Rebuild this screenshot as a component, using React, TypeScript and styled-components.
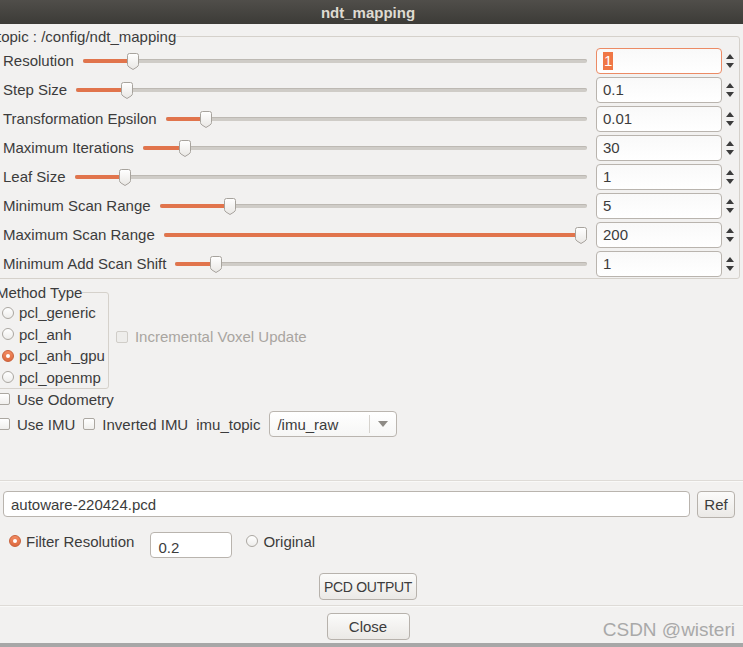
import React from "react"
import styled, { createGlobalStyle } from "styled-components"

const GlobalStyle = createGlobalStyle`
  html, body {
    margin: 0;
    padding: 0;
  }
  body {
    width: 743px;
    height: 647px;
    overflow: hidden;
    background: #a7a7a7;
    font-family: "Liberation Sans", Arial, sans-serif;
  }
`

const Window = styled.div`
  width: 752px;
  height: 643px;
  margin-left: -8px;
  display: flex;
  flex-direction: column;
  background: #f2f1f0;
  color: #3c3c3c;
  font-size: 15px;
  position: relative;
`

const TitleBar = styled.div`
  flex: none;
  height: 24px;
  display: flex;
  align-items: center;
  justify-content: center;
  background: linear-gradient(#504e4a, #3c3b37);
  color: #dfdbd2;
  font-weight: bold;
  font-size: 15px;
`

const Body = styled.div`
  display: flex;
  flex-direction: column;
  padding: 4px 4px 0 4px;
`

const Frame = styled.fieldset`
  margin: 0;
  padding: 1px 4px 0 6px;
  border: 1px solid #d5d1cb;
  border-radius: 3px;
  min-inline-size: 0;
`

const Legend = styled.legend`
  padding: 0;
  margin-left: -6px;
  line-height: 17px;
  font-size: 15px;
  color: #3c3c3c;
`

const ParamRow = styled.div`
  height: 29px;
  display: grid;
  grid-template-columns: auto 1fr 139px;
  align-items: center;
  column-gap: 9px;
`

const Label = styled.span<{ $ml?: number }>`
  white-space: nowrap;
  margin-left: ${(p) => p.$ml ?? 0}px;
`

const SliderBox = styled.div`
  position: relative;
  height: 18px;
`

const Groove = styled.div`
  position: absolute;
  left: 0;
  right: 0;
  top: 7px;
  height: 4px;
  border-radius: 2px;
  background: #cfccc7;
  box-shadow: inset 0 1px 0 #bdb9b3;
`

const Fill = styled.div`
  position: absolute;
  left: 0;
  top: 7px;
  height: 4px;
  border-radius: 2px;
  background: #e1744c;
`

const Handle = styled.svg`
  position: absolute;
  top: 1px;
  margin-left: -6px;
`

const SpinBox = styled.div`
  display: flex;
  align-items: center;
  gap: 3px;
`

const SpinField = styled.div<{ $focus?: boolean }>`
  width: 126px;
  height: 26px;
  box-sizing: border-box;
  border: 1px solid ${(p) => (p.$focus ? "#ec8b65" : "#b9b4ae")};
  border-radius: 4px;
  background: linear-gradient(#f9f9f9, #ffffff);
  display: flex;
  align-items: center;
  padding-left: 6px;
  font-size: 15px;
  color: #3c3c3c;
`

const Selected = styled.span`
  background: #f07746;
  color: #fff;
  padding: 0 1px;
  line-height: 18px;
`

const Arrows = styled.div`
  width: 10px;
  display: flex;
  flex-direction: column;
  align-items: center;
  gap: 4px;
`

const MethodRow = styled.div`
  display: flex;
  align-items: center;
  margin-top: 5px;
`

const MethodFrame = styled(Frame)`
  padding: 1px 3px 0 5px;
`

const RadioItem = styled.label`
  display: flex;
  align-items: center;
  gap: 5px;
  height: 21.5px;
  white-space: nowrap;
`

const RadioCircle = styled.span<{ $on?: boolean }>`
  width: 12px;
  height: 12px;
  box-sizing: border-box;
  border-radius: 50%;
  flex: none;
  display: flex;
  align-items: center;
  justify-content: center;
  border: 1px solid ${(p) => (p.$on ? "#c8603a" : "#aba7a1")};
  background: ${(p) =>
    p.$on ? "linear-gradient(#f28b62, #de6a3f)" : "linear-gradient(#ffffff, #eeedeb)"};
  &::after {
    content: "";
    display: ${(p) => (p.$on ? "block" : "none")};
    width: 4px;
    height: 4px;
    border-radius: 50%;
    background: #fff;
  }
`

const CheckItem = styled.label<{ $disabled?: boolean; $ml?: number }>`
  display: flex;
  align-items: center;
  gap: 7px;
  white-space: nowrap;
  margin-left: ${(p) => p.$ml ?? 0}px;
  color: ${(p) => (p.$disabled ? "#a9a5a0" : "#3c3c3c")};
`

const CheckBox = styled.span<{ $disabled?: boolean }>`
  width: 12px;
  height: 12px;
  box-sizing: border-box;
  flex: none;
  border-radius: 2px;
  border: 1px solid ${(p) => (p.$disabled ? "#d0cdc8" : "#aba7a1")};
  background: ${(p) => (p.$disabled ? "#eeedeb" : "linear-gradient(#ffffff, #f0efed)")};
`

const OdoRow = styled.div`
  height: 20px;
  display: flex;
  align-items: center;
  margin-left: 2px;
`

const ImuRow = styled.div`
  height: 26px;
  margin-top: 2px;
  display: flex;
  align-items: center;
  margin-left: 2px;
`

const Combo = styled.div`
  width: 128px;
  height: 26px;
  box-sizing: border-box;
  border: 1px solid #bab5af;
  border-radius: 4px;
  background: linear-gradient(#ffffff, #f6f6f5);
  display: flex;
  align-items: stretch;
  margin-left: 9px;
`

const ComboText = styled.div`
  flex: 1;
  display: flex;
  align-items: center;
  padding-left: 7px;
`

const ComboButton = styled.div`
  width: 26px;
  border-left: 1px solid #d6d3ce;
  margin: 3px 0;
  display: flex;
  align-items: center;
  justify-content: center;
`

const Separator = styled.div<{ $top: number }>`
  height: 1px;
  background: #dedbd7;
  border-bottom: 1px solid #f9f9f8;
  margin: ${(p) => p.$top}px -4px 0 -4px;
`

const FileRow = styled.div`
  display: flex;
  gap: 7px;
  margin-top: 9px;
  padding-left: 7px;
  padding-right: 5px;
`

const TextField = styled.div<{ $w?: number; $pt?: number; $ml?: number }>`
  ${(p) => (p.$w ? `width: ${p.$w}px;` : "flex: 1;")}
  height: 26px;
  box-sizing: border-box;
  border: 1px solid #b9b4ae;
  border-radius: 4px;
  background: #ffffff;
  display: flex;
  align-items: ${(p) => (p.$pt ? "flex-start" : "center")};
  padding-left: 7px;
  padding-top: ${(p) => p.$pt ?? 0}px;
  margin-left: ${(p) => p.$ml ?? 0}px;
  font-size: 15px;
`

const Button = styled.button<{ $w: number }>`
  width: ${(p) => p.$w}px;
  height: 27px;
  box-sizing: border-box;
  border: 1px solid #b7b2ac;
  border-radius: 4px;
  background: linear-gradient(#fbfbfa, #ebe9e6);
  font-family: "Liberation Sans", Arial, sans-serif;
  font-size: 15px;
  color: #3c3c3c;
  padding: 0;
  white-space: nowrap;
`

const SmallButton = styled(Button)`
  font-size: 14px;
  letter-spacing: -0.3px;
`

const FilterRow = styled.div`
  display: flex;
  align-items: flex-start;
  margin-top: 14px;
  padding-left: 13px;
`

const FilterLabel = styled(RadioItem)<{ $ml?: number }>`
  height: 18px;
  margin-left: ${(p) => p.$ml ?? 0}px;
`

const CenterRow = styled.div<{ $top: number }>`
  display: flex;
  justify-content: center;
  margin-top: ${(p) => p.$top}px;
`

const Watermark = styled.div`
  position: absolute;
  right: 9px;
  bottom: 2px;
  font-family: "Liberation Sans", Arial, sans-serif;
  font-size: 19px;
  color: #a9a9a9;
`

const params = [
  { label: "Resolution", value: "1", frac: 0.09, focus: true },
  { label: "Step Size", value: "0.1", frac: 0.09 },
  { label: "Transformation Epsilon", value: "0.01", frac: 0.084 },
  { label: "Maximum Iterations", value: "30", frac: 0.084 },
  { label: "Leaf Size", value: "1", frac: 0.089 },
  { label: "Minimum Scan Range", value: "5", frac: 0.154 },
  { label: "Maximum Scan Range", value: "200", frac: 1 },
  { label: "Minimum Add Scan Shift", value: "1", frac: 0.0875 },
]

const methods = ["pcl_generic", "pcl_anh", "pcl_anh_gpu", "pcl_openmp"]

const Slider = ({ frac }: { frac: number }) => {
  const pos = `calc(6px + (100% - 12px) * ${frac})`
  return (
    <SliderBox>
      <Groove />
      <Fill style={{ width: pos }} />
      <Handle width="12" height="17" viewBox="0 0 12 17" style={{ left: pos }}>
        <defs>
          <linearGradient id="hg" x1="0" y1="0" x2="0" y2="1">
            <stop offset="0" stopColor="#ffffff" />
            <stop offset="1" stopColor="#e9e7e4" />
          </linearGradient>
        </defs>
        <path
          d="M2.5 0.5 H9.5 Q11.5 0.5 11.5 2.5 V11.5 Q11.5 13 10 14 L6 16.5 L2 14 Q0.5 13 0.5 11.5 V2.5 Q0.5 0.5 2.5 0.5 Z"
          fill="url(#hg)"
          stroke="#a7a39d"
        />
      </Handle>
    </SliderBox>
  )
}

const SpinArrows = () => (
  <Arrows>
    <svg width="8" height="5" viewBox="0 0 8 5">
      <path d="M0 5 L4 0 L8 5 Z" fill="#3c3c3c" />
    </svg>
    <svg width="8" height="5" viewBox="0 0 8 5">
      <path d="M0 0 L8 0 L4 5 Z" fill="#3c3c3c" />
    </svg>
  </Arrows>
)

const App = () => {
  return (
    <>
      <GlobalStyle />
      <Window>
        <TitleBar>ndt_mapping</TitleBar>
        <Body>
          <Frame>
            <Legend>topic : /config/ndt_mapping</Legend>
            {params.map((p) => (
              <ParamRow key={p.label}>
                <Label>{p.label}</Label>
                <Slider frac={p.frac} />
                <SpinBox>
                  <SpinField $focus={p.focus}>
                    {p.focus ? <Selected>{p.value}</Selected> : p.value}
                  </SpinField>
                  <SpinArrows />
                </SpinBox>
              </ParamRow>
            ))}
          </Frame>

          <MethodRow>
            <MethodFrame>
              <Legend>Method Type</Legend>
              {methods.map((m) => (
                <RadioItem key={m}>
                  <RadioCircle $on={m === "pcl_anh_gpu"} />
                  {m}
                </RadioItem>
              ))}
            </MethodFrame>
            <CheckItem $disabled $ml={7}>
              <CheckBox $disabled />
              Incremental Voxel Update
            </CheckItem>
          </MethodRow>

          <OdoRow>
            <CheckItem>
              <CheckBox />
              Use Odometry
            </CheckItem>
          </OdoRow>

          <ImuRow>
            <CheckItem>
              <CheckBox />
              Use IMU
            </CheckItem>
            <CheckItem $ml={8}>
              <CheckBox />
              Inverted IMU
            </CheckItem>
            <Label $ml={8}>imu_topic</Label>
            <Combo>
              <ComboText>/imu_raw</ComboText>
              <ComboButton>
                <svg width="10" height="6" viewBox="0 0 10 6">
                  <path d="M0 0 L10 0 L5 6 Z" fill="#8e8b86" />
                </svg>
              </ComboButton>
            </Combo>
          </ImuRow>

          <Separator $top={43} />

          <FileRow>
            <TextField>autoware-220424.pcd</TextField>
            <Button $w={38}>Ref</Button>
          </FileRow>

          <FilterRow>
            <FilterLabel>
              <RadioCircle $on />
              Filter Resolution
            </FilterLabel>
            <TextField $w={82} $pt={6} $ml={16}>
              0.2
            </TextField>
            <FilterLabel $ml={14}>
              <RadioCircle />
              Original
            </FilterLabel>
          </FilterRow>

          <CenterRow $top={15}>
            <SmallButton $w={98}>PCD OUTPUT</SmallButton>
          </CenterRow>

          <Separator $top={5} />

          <CenterRow $top={6}>
            <Button $w={83}>Close</Button>
          </CenterRow>
        </Body>
        <Watermark>CSDN @wisteri</Watermark>
      </Window>
    </>
  )
}

export default App
